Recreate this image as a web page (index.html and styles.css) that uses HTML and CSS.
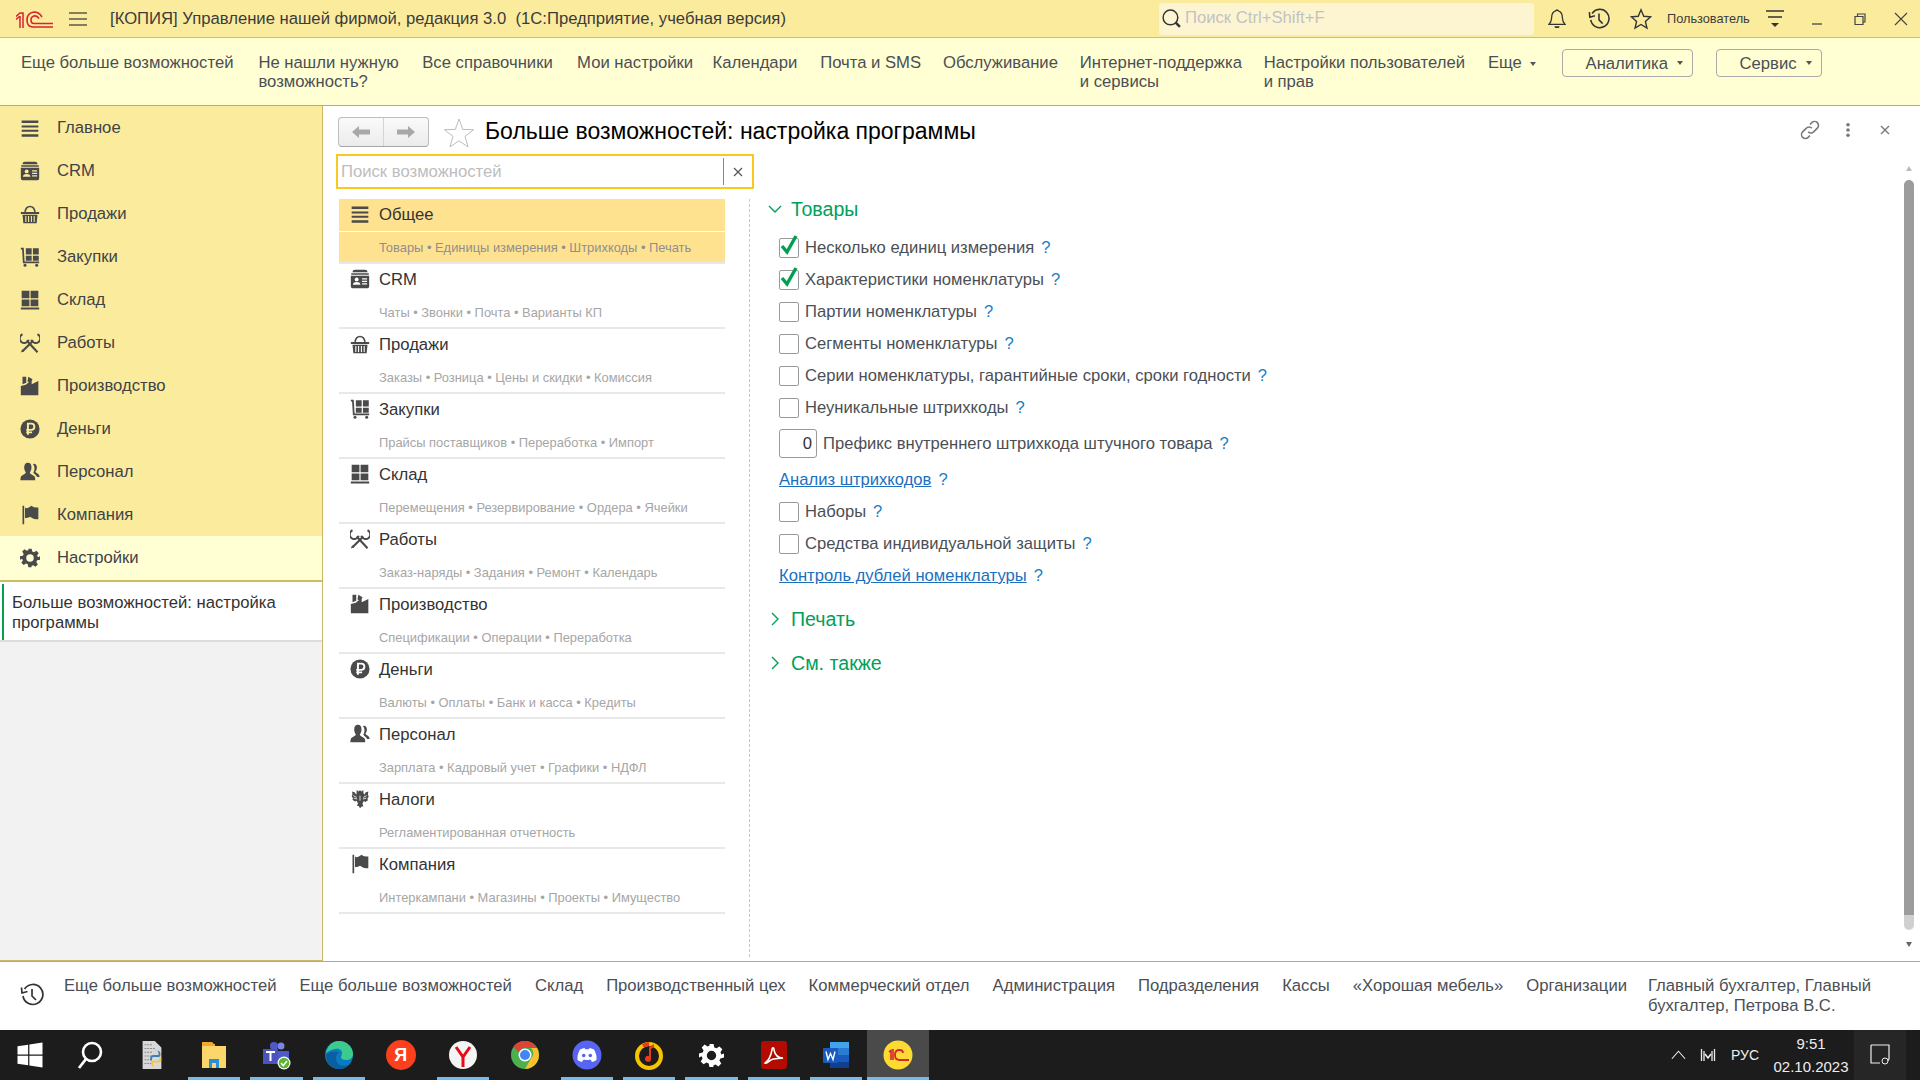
FILE: index.html
```html
<!DOCTYPE html>
<html lang="ru">
<head>
<meta charset="utf-8">
<title>Больше возможностей: настройка программы</title>
<link rel="stylesheet" href="styles.css">
</head>
<body>
<svg class="defs" width="0" height="0">
  <symbol id="i-menu" viewBox="0 0 24 24"><path d="M2 3h20v3H2zM2 9h20v2.500H2zM2 14h20v2.500H2zM2 19.500h20v3H2z"/></symbol>
  <symbol id="i-crm" viewBox="0 0 24 24"><path d="M3 3.500Q3 1 6 1h12q3 0 3 2.500v.5H3zM1.500 5h21v2h-21zM1 8h22v13q0 2-2 2H3q-2 0-2-2z"/><circle cx="8" cy="12.500" r="2.300" style="fill:var(--hole)"/><path d="M3.500 19q0-3.500 4.500-3.500t4.500 3.500z" style="fill:var(--hole)"/><path d="M14.500 11h6v1.500h-6zM14.500 14h6v1.500h-6zM14.500 17h6v1.500h-6z" style="fill:var(--hole)"/></symbol>
  <symbol id="i-sales" viewBox="0 0 24 24"><path d="M6 9.500Q7 3 12 3t6 6.500" fill="none" stroke-width="2" style="stroke:currentColor;fill:none"/><path d="M1 9.500h22v2.500H1zM3 13h18l-1 10H4z"/><path d="M7 14.500v7M10.300 14.500v7M13.700 14.500v7M17 14.500v7" fill="none" stroke-width="1.300" style="stroke:var(--hole)"/></symbol>
  <symbol id="i-buy" viewBox="0 0 24 24"><path d="M1 1h3.500l1 16.500H23v2H3.500L2.500 3H1z"/><path d="M7 1.500h7v7.500H7zM15.500 1.500h7v7.500h-7zM7 10.500h7v6H7zM15.500 10.500h7v6h-7z"/><circle cx="6" cy="22" r="1.800"/><circle cx="20" cy="22" r="1.800"/></symbol>
  <symbol id="i-stock" viewBox="0 0 24 24"><path d="M2 1h9.300v9H2zM12.700 1H22v9h-9.300zM2 11.300h9.300v8.200H2zM12.700 11.300H22v8.200h-9.300zM1 21h22v2.300H1z"/></symbol>
  <symbol id="i-work" viewBox="0 0 24 24"><path d="M8 9l13 14M16 9L3 22" style="fill:none;stroke:currentColor" stroke-width="2.600"/><path d="M3 1.500A5.500 5.500 0 1 0 10.500 8M21 1.500A5.500 5.500 0 1 1 13.500 8" style="fill:none;stroke:currentColor" stroke-width="2.300"/><path d="M1 23.500l1.500-4 2.500 2.500z"/></symbol>
  <symbol id="i-prod" viewBox="0 0 24 24"><path d="M3 1h4.500v7L3 10zM10 1l5 3-2 4-4-1.500zM1 23V12l6-1.500 7-6v5.500l8-4v17z"/></symbol>
  <symbol id="i-money" viewBox="0 0 24 24"><circle cx="12" cy="12" r="11.500"/><path d="M9.500 19V5.500h4a3.700 3.700 0 0 1 0 7.500h-6M7.500 16h7" fill="none" stroke-width="2.300" style="stroke:var(--hole);fill:none"/></symbol>
  <symbol id="i-staff" viewBox="0 0 24 24"><path d="M9.500 1c3 0 4.300 2.400 4.300 5.500 0 2.500-1 4.500-2 6 0 2 5 3 6 5.500.5 1.500.5 4 .5 4H.5s0-3 .7-4.500c1-2 5.800-3 5.800-5-1-1.500-2-3.500-2-6C5 3.400 6.500 1 9.500 1z"/><path d="M16.500 2c2.500 0 3.800 2 3.800 4.500 0 2-1 4-1.800 5 0 1.500 5 2.500 5 6.500h-3c-1-2.800-4-3.500-4.500-5.500 1-1.500 1.500-3.800 1.300-6-.2-1.500-.8-3-1.800-4z"/></symbol>
  <symbol id="i-tax" viewBox="0 0 24 24"><path d="M8 1l2 2 2-1.500L14 3l2-2v3l1 3 2-3 3-1-.5 4 1 2-1.500 2.500.5 2-3 2-2-1-1.500 3 1 3.500h-2L12 23l-1.500-2.500h-2l1-3.500L8 14l-2 1-3-2 .5-2L2 8.500l1-2L2.500 3l3 1 2 3L8 4z"/><path d="M4 8l4 2M20 8l-4 2M4.500 11l4 1M19.500 11l-4 1M12 8v6" stroke-width="1" style="stroke:var(--hole);fill:none"/></symbol>
  <symbol id="i-comp" viewBox="0 0 24 24"><path d="M3 1h2v22H3zM6 3q2 1.500 4.500 0L14 1l.5.5q2.500 2 7.500 1.500v14q-5 .5-7.500-1.500L12 14q-3 2-6 1.500z"/></symbol>
  <symbol id="i-gear" viewBox="0 0 24 24"><path fill-rule="evenodd" d="M10 1h4l.7 3.200 2.100.9L19.600 3.300l2.800 2.800-1.800 2.800.9 2.100L24 10v4l-3.500.8-.9 2.100 1.800 2.800-2.800 2.800-2.800-1.800-2.100.9L14 23h-4l-.7-3.400-2.100-.9-2.800 1.800-2.800-2.800 1.800-2.800-.9-2.100L0 14v-4l3.500-.8.900-2.100-1.800-2.800 2.800-2.800 2.800 1.800 2.100-.9zM12 7.500a4.500 4.500 0 1 0 0 9 4.500 4.500 0 0 0 0-9z"/></symbol>
  <symbol id="i-hist" viewBox="0 0 24 24"><path d="M4.500 6A10 10 0 1 1 3 13M1.500 4.500l.5 5.500 5.500-1.500M12 6v7l4 4" fill="none" stroke-width="1.700"/></symbol>
</svg>

<div class="app">
  <header class="titlebar">
    <svg class="logo" viewBox="0 0 37 17"><path d="M0 5.500L4 2h3v15M0 8.500L3.500 5.500M4 5v12" fill="none" stroke="#d9232e" stroke-width="1.500"/><path d="M37 16H17Q11 16 11 9T18 1q5 0 8 5M37 12.500H18Q15 12.500 15 9t3.500-4.300q3 0 4.500 3" fill="none" stroke="#d9232e" stroke-width="1.600"/></svg>
    <svg class="burger" viewBox="0 0 18 14"><path d="M0 1h18M0 7h18M0 13h18" stroke="#5a5a4a" stroke-width="1.400" fill="none"/></svg>
    <div class="apptitle">[КОПИЯ] Управление нашей фирмой, редакция 3.0&nbsp; (1С:Предприятие, учебная версия)</div>
    <div class="gsearch">
      <svg class="gs-ic" viewBox="0 0 20 20"><circle cx="9" cy="9" r="7" fill="none" stroke="#333" stroke-width="1.400"/><path d="M14 14l4 4" stroke="#333" stroke-width="2.400"/></svg>
      <span>Поиск Ctrl+Shift+F</span>
    </div>
    <svg class="tb-ic bell" viewBox="0 0 20 24"><path d="M10 2a2 2 0 0 1 1.500 1C15 4 16 7 16 11c0 3 1 5 3 7H1c2-2 3-4 3-7 0-4 1-7 4.500-8A2 2 0 0 1 10 2z" fill="none" stroke="#333" stroke-width="1.400"/><path d="M7 20h6l-1 2H8z" fill="#333"/></svg>
    <svg class="tb-ic hist" viewBox="0 0 24 24"><use href="#i-hist" class="strk"/></svg>
    <svg class="tb-ic star" viewBox="0 0 24 24"><path d="M12 2l3 7 7.500.7-5.700 5 1.700 7.300L12 18l-6.500 4 1.700-7.300-5.700-5L9 9z" fill="none" stroke="#333" stroke-width="1.500"/></svg>
    <div class="user">Пользователь</div>
    <svg class="tb-ic filt" viewBox="0 0 20 20"><path d="M1 2h18M3 8h14" stroke="#333" stroke-width="1.400" fill="none"/><path d="M6 14h8l-4 4z" fill="#333"/></svg>
    <svg class="win-ic wmin" viewBox="0 0 14 14"><path d="M2 12h10" stroke="#444" stroke-width="1.300"/></svg>
    <svg class="win-ic wmax" viewBox="0 0 14 14"><path d="M2 4.500h8v8H2zM4.500 4.500V2h7.500v8h-2" fill="none" stroke="#444" stroke-width="1.200"/></svg>
    <svg class="win-ic wcls" viewBox="0 0 14 14"><path d="M1 1l12 12M13 1L1 13" stroke="#444" stroke-width="1.100"/></svg>
  </header>

  <nav class="panel">
    <span>Еще больше возможностей</span>
    <span>Не нашли нужную<br>возможность?</span>
    <span>Все справочники</span>
    <span>Мои настройки</span>
    <span>Календари</span>
    <span>Почта и SMS</span>
    <span>Обслуживание</span>
    <span>Интернет-поддержка<br>и сервисы</span>
    <span>Настройки пользователей<br>и прав</span>
    <span class="more">Еще<i class="caret"></i></span>
    <span class="pbtn pbtn-a">Аналитика<i class="caret"></i></span>
    <span class="pbtn pbtn-s">Сервис<i class="caret"></i></span>
  </nav>

  <div class="middle">
    <aside class="sidebar">
      <ul class="sections">
        <li><svg class="sic"><use href="#i-menu"/></svg>Главное</li>
        <li><svg class="sic"><use href="#i-crm"/></svg>CRM</li>
        <li><svg class="sic"><use href="#i-sales"/></svg>Продажи</li>
        <li><svg class="sic"><use href="#i-buy"/></svg>Закупки</li>
        <li><svg class="sic"><use href="#i-stock"/></svg>Склад</li>
        <li><svg class="sic"><use href="#i-work"/></svg>Работы</li>
        <li><svg class="sic"><use href="#i-prod"/></svg>Производство</li>
        <li><svg class="sic"><use href="#i-money"/></svg>Деньги</li>
        <li><svg class="sic"><use href="#i-staff"/></svg>Персонал</li>
        <li><svg class="sic"><use href="#i-comp"/></svg>Компания</li>
        <li class="cur"><svg class="sic"><use href="#i-gear"/></svg>Настройки</li>
      </ul>
      <div class="opened"><div class="opened-in">Больше возможностей: настройка программы</div></div>
    </aside>

    <main class="form">
      <div class="formbar">
        <div class="navbtns">
          <span class="nb"><svg viewBox="0 0 18 14"><path d="M0 7l7-6v3.500h11v5H7V13z" fill="#a8a8a8"/></svg></span>
          <span class="nb nb2"><svg viewBox="0 0 18 14"><path d="M18 7l-7-6v3.500H0v5h11V13z" fill="#a8a8a8"/></svg></span>
        </div>
        <svg class="fav" viewBox="0 0 30 29"><path d="M15 1l3.700 10.400 11 .3-8.700 6.700 3.100 10.600L15 22.800 5.900 29 9 18.400.3 11.700l11-.3z" fill="none" stroke="#bcbcbc" stroke-width="1"/></svg>
        <h1>Больше возможностей: настройка программы</h1>
        <svg class="fb-ic link" viewBox="0 0 24 24"><path d="M10 14a4 4 0 0 0 6 0l4-4a4 4 0 0 0-6-6l-2 2M14 10a4 4 0 0 0-6 0l-4 4a4 4 0 0 0 6 6l2-2" fill="none" stroke="#777" stroke-width="1.700"/></svg>
        <svg class="fb-ic dots" viewBox="0 0 6 18"><circle cx="3" cy="3" r="2" fill="#777"/><circle cx="3" cy="9" r="2" fill="#777"/><circle cx="3" cy="15" r="2" fill="#777"/></svg>
        <svg class="fb-ic xclose" viewBox="0 0 12 12"><path d="M2 2l8 8M10 2l-8 8" stroke="#777" stroke-width="1.400"/></svg>
      </div>
      <div class="formbody">
        <div class="leftcol">
          <div class="fsearch"><span class="ph">Поиск возможностей</span><span class="fx"><svg viewBox="0 0 10 10"><path d="M1 1l8 8M9 1l-8 8" stroke="#555" stroke-width="1.200"/></svg></span></div>
          <div class="listwrap">
            <div class="cat sel"><div class="cat-h"><svg class="lic"><use href="#i-menu"/></svg>Общее</div><div class="cat-s">Товары • Единицы измерения • Штрихкоды • Печать</div></div>
            <div class="cat"><div class="cat-h"><svg class="lic"><use href="#i-crm"/></svg>CRM</div><div class="cat-s">Чаты • Звонки • Почта • Варианты КП</div></div>
            <div class="cat"><div class="cat-h"><svg class="lic"><use href="#i-sales"/></svg>Продажи</div><div class="cat-s">Заказы • Розница • Цены и скидки • Комиссия</div></div>
            <div class="cat"><div class="cat-h"><svg class="lic"><use href="#i-buy"/></svg>Закупки</div><div class="cat-s">Прайсы поставщиков • Переработка • Импорт</div></div>
            <div class="cat"><div class="cat-h"><svg class="lic"><use href="#i-stock"/></svg>Склад</div><div class="cat-s">Перемещения • Резервирование • Ордера • Ячейки</div></div>
            <div class="cat"><div class="cat-h"><svg class="lic"><use href="#i-work"/></svg>Работы</div><div class="cat-s">Заказ-наряды • Задания • Ремонт • Календарь</div></div>
            <div class="cat"><div class="cat-h"><svg class="lic"><use href="#i-prod"/></svg>Производство</div><div class="cat-s">Спецификации • Операции • Переработка</div></div>
            <div class="cat"><div class="cat-h"><svg class="lic"><use href="#i-money"/></svg>Деньги</div><div class="cat-s">Валюты • Оплаты • Банк и касса • Кредиты</div></div>
            <div class="cat"><div class="cat-h"><svg class="lic"><use href="#i-staff"/></svg>Персонал</div><div class="cat-s">Зарплата • Кадровый учет • Графики • НДФЛ</div></div>
            <div class="cat"><div class="cat-h"><svg class="lic"><use href="#i-tax"/></svg>Налоги</div><div class="cat-s">Регламентированная отчетность</div></div>
            <div class="cat"><div class="cat-h"><svg class="lic"><use href="#i-comp"/></svg>Компания</div><div class="cat-s">Интеркампани • Магазины • Проекты • Имущество</div></div>
          </div>
        </div>
        <section class="rightcol">
          <div class="grp"><svg class="chev" viewBox="0 0 14 10"><path d="M1 2l6 6 6-6" fill="none" stroke="#00a05a" stroke-width="1.400"/></svg>Товары</div>
          <div class="rows">
            <div class="r"><span class="cb on"><svg viewBox="0 0 20 24"><path d="M3 13l5 6L17 3" fill="none" stroke="#00a050" stroke-width="3.400"/></svg></span>Несколько единиц измерения<b class="q">?</b></div>
            <div class="r"><span class="cb on"><svg viewBox="0 0 20 24"><path d="M3 13l5 6L17 3" fill="none" stroke="#00a050" stroke-width="3.400"/></svg></span>Характеристики номенклатуры<b class="q">?</b></div>
            <div class="r"><span class="cb"></span>Партии номенклатуры<b class="q">?</b></div>
            <div class="r"><span class="cb"></span>Сегменты номенклатуры<b class="q">?</b></div>
            <div class="r"><span class="cb"></span>Серии номенклатуры, гарантийные сроки, сроки годности<b class="q">?</b></div>
            <div class="r"><span class="cb"></span>Неуникальные штрихкоды<b class="q">?</b></div>
            <div class="r r-in"><span class="num">0</span>Префикс внутреннего штрихкода штучного товара<b class="q">?</b></div>
            <div class="r"><a class="lnk">Анализ штрихкодов</a><b class="q">?</b></div>
            <div class="r"><span class="cb"></span>Наборы<b class="q">?</b></div>
            <div class="r"><span class="cb"></span>Средства индивидуальной защиты<b class="q">?</b></div>
            <div class="r"><a class="lnk">Контроль дублей номенклатуры</a><b class="q">?</b></div>
          </div>
          <div class="grp grp-c"><svg class="chev2" viewBox="0 0 10 14"><path d="M2 1l6 6-6 6" fill="none" stroke="#00a05a" stroke-width="1.400"/></svg>Печать</div>
          <div class="grp grp-c"><svg class="chev2" viewBox="0 0 10 14"><path d="M2 1l6 6-6 6" fill="none" stroke="#00a05a" stroke-width="1.400"/></svg>См. также</div>
        </section>
        <div class="scroll"><i class="up"></i><i class="thumb"></i><i class="dn"></i></div>
      </div>
    </main>
  </div>

  <footer class="history">
    <svg class="hicon" viewBox="0 0 24 24"><use href="#i-hist" class="strk"/></svg>
    <div class="hitems">
      <span>Еще больше возможностей</span>
      <span>Еще больше возможностей</span>
      <span>Склад</span>
      <span>Производственный цех</span>
      <span>Коммерческий отдел</span>
      <span>Администрация</span>
      <span>Подразделения</span>
      <span>Кассы</span>
      <span>«Хорошая мебель»</span>
      <span>Организации</span>
      <span>Главный бухгалтер, Главный<br>бухгалтер, Петрова В.С.</span>
    </div>
  </footer>

  <div class="taskbar">
    <div class="tk"><svg viewBox="0 0 24 24"><path d="M2 5l8.500-1.200V11.500H2zM11.500 3.600L22 2v9.500H11.500zM2 12.500h8.500v7.700L2 19zM11.500 12.500H22V22l-10.500-1.600z" fill="#fff"/></svg></div>
    <div class="tk"><svg viewBox="0 0 30 30"><circle cx="17" cy="12" r="9" fill="none" stroke="#fff" stroke-width="2.600"/><path d="M11 19l-7 9" stroke="#fff" stroke-width="2.800"/></svg></div>
    <div class="tk"><svg viewBox="0 0 30 32"><path d="M5 1h13l7 7v23H5z" fill="#d8d8d8"/><path d="M7 5h9M7 9h12M7 13h8M7 17h7M7 21h7M7 25h8" stroke="#888" stroke-width="1.200" stroke-dasharray="2 1"/><path d="M18 11c4 0 4 2 4 5h-5c-3 0-4 1-4 4 0 2 1 2 2 2v-2c0-2 1-2 3-2h4c2 0 2-1 2-3 0-3-2-4-6-4z" fill="#3f7db5"/><path d="M20 29c-4 0-4-2-4-5h5c3 0 4-1 4-4 0-2-1-2-2-2v2c0 2-1 2-3 2h-4c-2 0-2 1-2 3 0 3 2 4 6 4z" fill="#f5c63a"/></svg></div>
    <div class="tk ul"><svg viewBox="0 0 30 30"><path d="M3 2h10l2 2h1v24H3z" fill="#f1a92d"/><path d="M3 6h24v22H3z" fill="#fbd66a"/><path d="M10 28v-9h10v9h-3v-5h-4v5z" fill="#2a8fd8"/></svg></div>
    <div class="tk ul"><svg viewBox="0 0 30 30"><circle cx="20" cy="6" r="3.500" fill="#7b83eb"/><circle cx="13" cy="6" r="4" fill="#5059c9"/><path d="M8 11h20v10a6 6 0 0 1-12 0z" fill="#5059c9"/><path d="M2 9h15v15H2z" fill="#4b53bc"/><path d="M5 12h9M9.500 12v9" stroke="#fff" stroke-width="2"/><circle cx="23" cy="23" r="6.500" fill="#fff"/><circle cx="23" cy="23" r="5.300" fill="#5cb531"/><path d="M20 23l2.300 2.500 3.700-4.500" stroke="#fff" stroke-width="1.500" fill="none"/></svg></div>
    <div class="tk ul"><svg viewBox="0 0 30 30"><circle cx="15" cy="15" r="14" fill="#0c7ac2"/><path d="M2 15C2 7 8 1 15 1c8 0 14 6 14 13 0 4-3 6-7 6-3 0-5-1-5-3 0-1 1-2 1-4 0-3-3-5-7-4C6 10 2 12 2 15z" fill="#3bcb8e"/><path d="M2 15c0 8 6 14 13 14 4 0 7-1 9-4-6 2-12 0-12-7 0-3 2-5 3-6-6-1-13 1-13 3z" fill="#0a5fa0"/></svg></div>
    <div class="tk"><span class="ya">Я</span></div>
    <div class="tk ul"><svg viewBox="0 0 30 30"><circle cx="15" cy="15" r="14" fill="#f4f4f4"/><path d="M8 7l7 10v10M22 7l-7 10" fill="none" stroke="#e30c17" stroke-width="3"/></svg></div>
    <div class="tk"><svg viewBox="0 0 30 30"><circle cx="15" cy="15" r="14" fill="#4caf50"/><path d="M15 1a14 14 0 0 1 12.100 7H15a7 7 0 0 0-6.500 4.500L3.500 6.500A14 14 0 0 1 15 1z" fill="#db4437"/><path d="M27.100 8A14 14 0 0 1 15 29l6-10.500a7 7 0 0 0 0-10.500z" fill="#fbc02d"/><circle cx="15" cy="15" r="6.500" fill="#fff"/><circle cx="15" cy="15" r="5" fill="#4285f4"/></svg></div>
    <div class="tk ul"><svg viewBox="0 0 30 30"><circle cx="15" cy="15" r="14.500" fill="#5865f2"/><path d="M8 9.500q3-1.500 4.500-1.500l.7 1.300h3.600L17.500 8q1.500 0 4.500 1.500 3 5 2.500 10.500-2 1.500-4.500 2l-1-1.700-1-.8q-3 1-6 0l-1 .8-1 1.700q-2.500-.5-4.500-2Q5 14.500 8 9.500z" fill="#fff"/><circle cx="11.700" cy="15.500" r="1.800" fill="#5865f2"/><circle cx="18.300" cy="15.500" r="1.800" fill="#5865f2"/></svg></div>
    <div class="tk ul"><svg viewBox="0 0 30 30"><circle cx="15" cy="16" r="12" fill="none" stroke="#f7c400" stroke-width="4"/><path d="M15 4a12 12 0 0 0-6 2" fill="none" stroke="#e83a1e" stroke-width="4"/><path d="M15 19V7l5-3v3l-3 2v10a3 3 0 1 1-2-3z" fill="#e83a1e"/></svg></div>
    <div class="tk ul gearbtn"><svg viewBox="0 0 24 24"><use href="#i-gear" class="white"/></svg></div>
    <div class="tk ul"><svg viewBox="0 0 30 30"><rect x="2" y="1" width="26" height="28" rx="3" fill="#b30b00"/><path d="M6 23c3-2 6-8 7-13 0-3 2-3 2 0 1 5 4 8 9 8-4 1-9 0-12 2-2 1-4 4-6 3z" fill="none" stroke="#fff" stroke-width="1.500"/></svg></div>
    <div class="tk ul"><svg viewBox="0 0 30 30"><path d="M9 2h19v26H9z" fill="#2b7cd3"/><path d="M9 2h19v6H9z" fill="#41a5ee"/><path d="M9 15h19v7H9z" fill="#185abd"/><path d="M9 22h19v6H9z" fill="#103f91"/><rect x="2" y="8" width="15" height="15" rx="1" fill="#185abd"/><path d="M5 11.500l2 8 2.500-6 2.500 6 2-8" fill="none" stroke="#fff" stroke-width="1.400"/></svg></div>
    <div class="tk ul act"><svg viewBox="0 0 30 30"><circle cx="15" cy="15" r="14.500" fill="#fddb33"/><path d="M6 12l2-1.500V20M10 9v11" fill="none" stroke="#d9232e" stroke-width="1.600"/><path d="M20 13c0-2-1.500-3-3.500-3-3 0-4.500 2-4.500 5s1.500 5 4.500 5H26" fill="none" stroke="#d9232e" stroke-width="1.800"/></svg></div>
    <div class="tray">
      <svg class="t-ch" viewBox="0 0 16 10"><path d="M1 9l7-8 7 8" fill="none" stroke="#eee" stroke-width="1.200"/></svg>
      <svg class="t-net" viewBox="0 0 16 16"><path d="M1.500 2v12M14.500 2v12M4 4v10M12 4v10" stroke="#eee" stroke-width="1.300"/><path d="M5 7l3 4 3-4" fill="none" stroke="#eee" stroke-width="1.600"/></svg>
      <span class="t-lang">РУС</span>
      <div class="clock"><div>9:51</div><div>02.10.2023</div></div>
      <div class="notif"><svg viewBox="0 0 20 22"><path d="M1 1h18v14l-3 4h-3M10 19H1V1" fill="none" stroke="#eee" stroke-width="1.200"/><circle cx="15" cy="17" r="3" fill="#262626" stroke="#eee" stroke-width="1"/></svg></div>
    </div>
  </div>
</div>
</body>
</html>
```
FILE: styles.css
```css
* { box-sizing: border-box; }
html, body { margin: 0; padding: 0; height: 100%; }
body { font-family: "Liberation Sans", Arial, sans-serif; font-size: 16.670px; color: #4b4f55; background: #fff; overflow: hidden; }
.defs { position: absolute; }
.strk { fill: none; stroke: #333; }
.white { fill: #fff; }
.app { width: 1920px; height: 1080px; display: flex; flex-direction: column; }

/* title bar */
.titlebar { height: 38px; flex: none; display: flex; align-items: center; background: #fbeb9c; border-bottom: 1px solid #cdbf6c; color: #3c3c3c; padding-left: 16px; }
.logo { width: 37px; height: 17px; flex: none; margin-top: 1px; }
.burger { width: 18px; height: 14px; flex: none; margin-left: 16px; }
.apptitle { margin-left: 23px; width: 1049px; flex: none; white-space: nowrap; }
.gsearch { width: 375px; height: 32px; flex: none; display: flex; align-items: center; background: #fdf5d2; border-radius: 3px; padding-left: 0; color: #c2c2c2; }
.gs-ic { width: 21px; height: 21px; flex: none; margin: 0 3px 0 2px; }
.gsearch span { margin-top: -2px; }
.tb-ic { flex: none; }
.bell { width: 18px; height: 22px; margin-left: 14px; }
.hist { width: 22px; height: 22px; margin-left: 22px; }
.star { width: 22px; height: 22px; margin-left: 20px; }
.user { font-size: 12.750px; margin-left: 15px; width: 83px; flex: none; white-space: nowrap; }
.filt { width: 20px; height: 20px; margin-left: 15px; }
.win-ic { width: 14px; height: 14px; flex: none; }
.wmin { margin-left: 25px; }
.wmax { margin-left: 29px; }
.wcls { margin-left: 27px; }

/* section panel */
.panel { height: 68px; flex: none; display: flex; align-items: flex-start; gap: 23px; padding: 15px 0 0 21px; background: #ffffd3; border-bottom: 1px solid #a9a9a9; line-height: 19px; white-space: nowrap; }
.panel span:nth-child(2) { margin-left: 2px; }
.panel span:nth-child(3) { margin-left: .5px; }
.panel span:nth-child(4) { margin-left: 1.300px; }
.panel span:nth-child(5) { margin-left: -3.700px; }
.panel span:nth-child(7) { margin-left: -1.200px; }
.panel span:nth-child(8) { margin-left: -1.200px; }
.panel span:nth-child(9) { margin-left: -1.300px; }
.caret { display: inline-block; width: 0; height: 0; border: 3.500px solid transparent; border-top: 4px solid #555; border-bottom: 0; margin-left: 9px; vertical-align: 2px; }
.more .caret { margin-left: 8px; }
.pbtn { height: 28px; margin-top: -4px; border: 1px solid #aaa; border-radius: 4px; display: flex; align-items: center; padding-left: 23px; }
.panel .pbtn-a { width: 131px; margin-left: 2.700px; }
.panel .pbtn-s { width: 106px; margin-left: 0; }

.middle { flex: 1; min-height: 0; display: flex; }

/* sidebar */
.sidebar { width: 323px; flex: none; background: #f2f2f2; border-right: 1px solid #c9b969; border-bottom: 1px solid #c9b969; display: flex; flex-direction: column; }
.sections { list-style: none; margin: 0; padding: 0; background: #fbeb9c; border-bottom: 2px solid #cdbb62; --hole: #fbeb9c; }
.sections li { height: 43px; display: flex; align-items: center; color: #3f4348; padding-left: 20px; }
.sections li.cur { background: #ffffd3; --hole: #ffffd3; height: 44px; }
.sic { width: 20px; height: 20px; flex: none; fill: #4a4a4a; color: #4a4a4a; margin-right: 17px; }
.opened { background: #fff; height: 60px; border-bottom: 2px solid #dcdcdc; padding: 2px 0 0 2px; }
.opened-in { border-left: 2px solid #00a050; height: 56px; padding: 9px 10px 0 8px; line-height: 20px; color: #333; }

/* form */
.form { flex: 1; min-width: 0; display: flex; flex-direction: column; --hole: #fff; }
.formbar { height: 48px; flex: none; display: flex; align-items: center; padding: 0 29px 0 15px; }
.navbtns { width: 91px; height: 30px; display: flex; margin-top: 4px; border: 1px solid #bdbdbd; border-bottom-color: #a5a5a5; border-radius: 4px; background: linear-gradient(#fafafa, #ececec); flex: none; }
.nb { flex: 1; display: flex; align-items: center; justify-content: center; }
.nb2 { border-left: 1px solid #d4d4d4; }
.nb svg { width: 18px; height: 14px; }
.fav { width: 30px; height: 29px; margin: 4px 0 0 15px; flex: none; }
h1 { margin: 3px 0 0 11px; font-size: 23px; font-weight: 400; color: #000; flex: 1; white-space: nowrap; }
.fb-ic { flex: none; margin-top: 0; }
.link { width: 22px; height: 22px; }
.dots { width: 6px; height: 16px; margin-left: 24px; }
.xclose { width: 12px; height: 12px; margin-left: 28px; }
.formbody { flex: 1; min-height: 0; display: flex; }
.leftcol { width: 431px; flex: none; padding-left: 13px; display: flex; flex-direction: column; }
.fsearch { width: 418px; height: 35px; flex: none; border: 2px solid #fac921; display: flex; align-items: center; padding-left: 3px; color: #bdbdbd; }
.ph { flex: 1; }
.fx { width: 29px; height: 27px; border-left: 1px solid #888; display: flex; align-items: center; justify-content: center; }
.fx svg { width: 10px; height: 10px; }
.listwrap { flex: 1; width: 414px; margin-top: 10px; margin-bottom: 4px; padding: 0 24px 0 3px; border-right: 1px dashed #c8c8c8; }
.cat { height: 65px; border-bottom: 2px solid #e8e8e8; }
.cat-h { height: 32px; display: flex; align-items: center; color: #333; padding-left: 11px; }
.lic { width: 20px; height: 20px; flex: none; fill: #4a4a4a; color: #4a4a4a; margin-right: 9px; margin-top: -2px; }
.cat-s { height: 31px; padding-left: 40px; font-size: 12.900px; line-height: 34px; color: #a6a6a6; white-space: nowrap; }
.sel .cat-h { background: #ffe28f; border-bottom: 1px solid #fff; height: 33px; }
.sel .cat-s { background: #ffe28f; height: 30px; line-height: 31px; color: #8f8f8f; }

.rightcol { flex: 1; min-width: 0; padding: 45px 0 0 14px; color: #4b4f55; }
.grp { height: 20px; display: flex; align-items: center; font-size: 19.600px; color: #00a05a; }
.chev { width: 14px; height: 10px; margin-right: 9px; flex: none; }
.chev2 { width: 10px; height: 14px; margin: 0 11px 0 2px; flex: none; }
.rows { padding: 13px 0 0 11px; font-size: 16.600px; }
.r { height: 32px; display: flex; align-items: center; white-space: nowrap; }
.r-in { height: 40px; padding-bottom: 1px; }
.cb { width: 20px; height: 20px; flex: none; border: 1px solid #9a9a9a; border-radius: 2px; margin-right: 6px; position: relative; }
.cb svg { position: absolute; left: -1px; top: -6px; width: 20px; height: 24px; }
.num { width: 38px; height: 29px; flex: none; border: 1px solid #9a9a9a; border-radius: 3px; margin: 0 6px 0 0; text-align: right; padding-right: 4px; line-height: 27px; color: #333; font-size: 16.670px; }
.q { font-weight: 400; color: #1a7fc4; margin-left: 7px; }
.lnk { color: #1a6fc0; text-decoration: underline; }
.grp-c { margin-top: 24px; }
.rows + .grp-c { margin-top: 17px; }
.scroll { width: 16px; flex: none; margin-right: 3px; display: flex; flex-direction: column; align-items: center; padding-top: 12px; }
.up { width: 0; height: 0; border: 3px solid transparent; border-bottom: 5px solid #bbb; border-top: 0; }
.thumb { width: 10px; height: 750px; margin-top: 9px; border-radius: 5px; background: linear-gradient(#9c9c9c 735px, #d0d0d0 735px); }
.dn { width: 0; height: 0; margin-top: 12px; border: 3px solid transparent; border-top: 5px solid #666; border-bottom: 0; }

/* history */
.history { height: 69px; flex: none; border-top: 1px solid #a9a9a9; background: #fff; display: flex; padding-left: 20px; }
.hicon { width: 24px; height: 24px; flex: none; margin-top: 21px; }
.hitems { display: flex; gap: 23px; padding: 14px 0 0 20px; line-height: 20px; white-space: nowrap; color: #4b4f55; }
.hitems span:last-child { margin-left: -2px; }

/* taskbar */
.taskbar { height: 50px; flex: none; background: #1c1c1c; display: flex; align-items: center; color: #eee; }
.tk { width: 62.150px; height: 50px; flex: none; display: flex; align-items: center; justify-content: center; position: relative; }
.tk svg { width: 30px; height: 30px; }
.tk.gearbtn svg { width: 25px; height: 25px; }
.tk:first-child { width: 59px; }
.tk.ul::after { content: ""; position: absolute; left: 5px; right: 5px; bottom: 0; height: 3px; background: #76b9ed; }
.tk.act { background: #4a4a4a; }
.tk.act::after { left: 0; right: 0; }
.ya { width: 30px; height: 30px; border-radius: 50%; background: #fc3f1d; color: #fff; font-size: 18px; font-weight: 700; display: flex; align-items: center; justify-content: center; }
.tray { margin-left: auto; display: flex; align-items: center; height: 50px; font-size: 14px; }
.t-ch { width: 15px; height: 10px; flex: none; }
.t-net { width: 16px; height: 16px; flex: none; margin-left: 14px; }
.t-lang { margin-left: 15px; font-size: 14px; }
.clock { width: 86px; text-align: center; line-height: 23px; margin-left: 9px; font-size: 15px; }
.notif { width: 52px; height: 50px; background: #262626; margin-right: 14px; display: flex; align-items: center; justify-content: center; }
.notif svg { width: 20px; height: 22px; }
```
